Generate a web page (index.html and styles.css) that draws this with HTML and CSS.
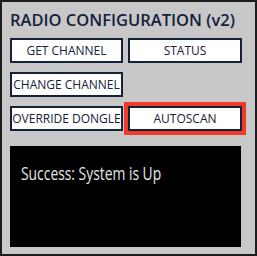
FILE: index.html
```html
<!DOCTYPE html>
<html lang="en">
<head>
  <meta charset="UTF-8">
  <meta name="viewport" content="width=device-width, initial-scale=1.0">
  <title>Radio Configuration</title>
  <link rel="stylesheet" href="styles.css">
</head>
<body>

  <div class="panel">
    <h2 class="title">RADIO CONFIGURATION (v2)</h2>

    <!-- command buttons -->
    <div class="buttons">
      <button class="btn">GET CHANNEL</button>
      <button class="btn">STATUS</button>
      <button class="btn">CHANGE CHANNEL</button>
      <div></div>
      <button class="btn">OVERRIDE DONGLE</button>
      <button class="btn selected">AUTOSCAN</button>
    </div>

    <!-- output console -->
    <div class="console"><span class="console-text">Success: System is Up</span></div>
  </div>

</body>
</html>
```

FILE: styles.css
```css
body {
  margin: 0;
  font-family: "Open Sans", "Noto Sans", sans-serif;
}
.panel {
  box-sizing: border-box;
  width: 257px;
  height: 256px;
  background-color: #c8c8c8;
  border: 2px solid #1c1c1c;
  padding: 8px 0 0 8px;
}
.title {
  margin: 0;
  font-size: 16.5px;
  font-weight: 600;
  color: #14213a;
  line-height: 20px;
}
.buttons {
  display: grid;
  grid-template-columns: 113px 114px;
  grid-auto-rows: 25px;
  column-gap: 5px;
  row-gap: 9px;
  margin-top: 8px;
}
.btn {
  box-sizing: border-box;
  background-color: #ffffff;
  border: 2px solid #14213a;
  font-family: "Open Sans", "Noto Sans", sans-serif;
  font-size: 12px;
  color: #14213a;
  padding: 0;
  white-space: nowrap;
}
.selected {
  outline: 4px solid #f23a2c;
  outline-offset: 0;
}
.console {
  box-sizing: border-box;
  width: 231px;
  height: 101px;
  margin-top: 15px;
  background-color: #000000;
  color: #e6e6e6;
  font-size: 18px;
  padding: 15px 0 0 11px;
}
.console-text {
  display: inline-block;
  transform: scaleX(0.77);
  transform-origin: left center;
}
```
